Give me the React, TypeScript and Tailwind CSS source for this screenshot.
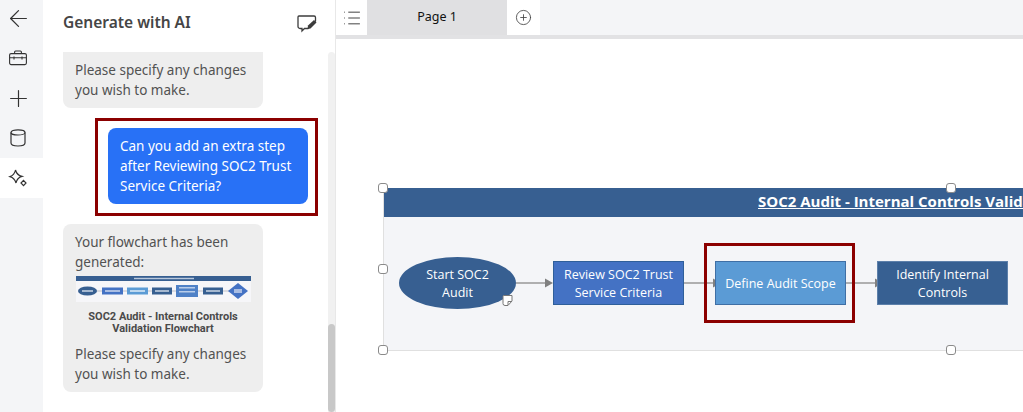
import React from 'react';
import { ArrowLeft, CirclePlus, List, Plus } from 'lucide-react';

const Handle = ({ className }: { className: string }) => (
  <div className={`absolute w-[10px] h-[10px] bg-white border border-[#8a8a8a] rounded-[3px] ${className}`} />
);

// tiny preview of the generated flowchart
const Thumbnail = () => (
  <svg width="175" height="26" viewBox="0 0 175 26" className="block mx-auto blur-[0.3px]">
    <rect width="175" height="26" fill="#f6f6f9" />
    <rect width="175" height="5" fill="#375f91" />
    <rect x="58" y="1.8" width="60" height="1.4" fill="#b9c8dc" />
    <line x1="10" y1="15" x2="160" y2="15" stroke="#9aa0a8" strokeWidth="0.6" />
    <ellipse cx="11.5" cy="15" rx="9.5" ry="4.5" fill="#375f91" />
    <rect x="26" y="11.5" width="21" height="7" fill="#4472c4" />
    <rect x="51" y="11.5" width="21" height="7" fill="#5b9bd5" />
    <rect x="76" y="11.5" width="20" height="7" fill="#375f91" />
    <rect x="100" y="9" width="22" height="12" fill="#4f81c7" />
    <rect x="127" y="11.5" width="20" height="7" fill="#375f91" />
    <path d="M162 7 L172 15 L162 23 L152 15 Z" fill="#4472c4" />
    <rect x="29" y="14" width="15" height="2" fill="#a9bde3" />
    <rect x="54" y="14" width="15" height="2" fill="#bcd7ef" />
    <rect x="79" y="14" width="14" height="2" fill="#a5b8d0" />
    <rect x="103" y="11" width="16" height="1.5" fill="#b9cdea" />
    <rect x="103" y="15" width="16" height="1.5" fill="#b9cdea" />
    <rect x="130" y="14" width="14" height="2" fill="#a5b8d0" />
    <rect x="6" y="14" width="11" height="2" fill="#a5b8d0" />
    <rect x="158" y="13" width="8" height="4" fill="#a9bde3" />
  </svg>
);

const Connector = ({ className }: { className: string }) => (
  <svg width="38" height="12" viewBox="0 0 38 12" className={`absolute ${className}`}>
    <line x1="0" y1="6" x2="30" y2="6" stroke="#808080" strokeWidth="1.2" />
    <path d="M29 1.5 L37 6 L29 10.5 Z" fill="#808080" />
  </svg>
);

const App: React.FC = () => {
  return (
    <div className="flex w-[1023px] h-[412px] overflow-hidden bg-white text-[#3f3f46] font-['Noto_Sans',sans-serif]">
      {/* icon rail */}
      <div className="w-[43px] shrink-0 bg-[#f4f5f7] flex flex-col text-[#333333]">
        <div className="h-[38px] pb-[2px] pr-[7px] flex items-center justify-center"><ArrowLeft size={27} strokeWidth={1.1} /></div>
        <div className="h-[40px] pr-[7px] flex items-center justify-center">
          <svg width="18" height="16" viewBox="0 0 18 16" fill="none" stroke="currentColor" strokeWidth="1.1">
            <rect x="0.6" y="3.6" width="16.8" height="11" rx="1.5" />
            <path d="M5.6 3.6 V2 A1 1 0 0 1 6.6 1 H11.4 A1 1 0 0 1 12.4 2 V3.6" />
            <path d="M0.6 7.8 H17.4 M5 6.4 V9.4 M13 6.4 V9.4" />
          </svg>
        </div>
        <div className="h-[40px] pr-[7px] flex items-center justify-center"><Plus size={27} strokeWidth={1.05} /></div>
        <div className="h-[40px] pr-[7px] flex items-center justify-center">
          <svg width="16" height="18" viewBox="0 0 16 18" fill="none" stroke="currentColor" strokeWidth="1.2">
            <ellipse cx="8" cy="3.4" rx="7" ry="2.6" />
            <path d="M1 3.4 V14 C1 16 3.5 17 8 17 C12.5 17 15 16 15 14 V3.4" />
          </svg>
        </div>
        <div className="h-[40px] pr-[7px] bg-white flex items-center justify-center">
          <svg width="20" height="20" viewBox="0 0 20 20" fill="none" stroke="currentColor" strokeWidth="1.2">
            <path d="M7.5 2 C8.4 5.6 10 7.4 14 8.4 C10.4 9.4 8.8 11 8 15 C7 11.2 5.4 9.6 2 8.6 C5.4 7.4 6.8 5.6 7.5 2 Z" />
            <path d="M15.5 12.4 L18 15 L15.5 17.6 L13 15 Z" />
          </svg>
        </div>
      </div>

      {/* chat panel */}
      <div className="w-[293px] shrink-0 flex flex-col border-r border-[#e8e8e8]">
        <div className="h-[52px] shrink-0 pl-5 pr-[18px] pb-[6px] flex items-center justify-between">
          <span className="text-[15.5px] font-semibold text-[#454545]">Generate with AI</span>
          <svg width="20" height="20" viewBox="0 0 20 20" fill="none" stroke="#3c3c3c" strokeWidth="1.3">
            <path d="M2 3 H17 A1.5 1.5 0 0 1 18.5 4.5 V8 L11 15.5 H7.5 L5 18 V15.5 H3 A2 2 0 0 1 1 13.5 V4 A1 1 0 0 1 2 3 Z" />
            <path d="M10.5 16 L11 12.5 L17 7 L19.5 9.5 L13.5 15.5 Z" fill="#3c3c3c" stroke="none" />
          </svg>
        </div>
        <div className="flex-1 flex min-h-0">
          <div className="flex-1 pl-5 text-[13.5px] leading-[20px] text-[#525252]">
            <div className="w-[200px] h-[56px] bg-[#eeeeee] rounded-b-lg px-3 pt-[8px]">
              Please specify any changes you wish to make.
            </div>
            <div className="w-[223px] h-[98px] mt-[10px] ml-[32px] border-[3px] border-[#8b0000] pl-[10px] pr-[7px] pt-[7px]">
              <div className="w-[200px] h-[76px] bg-[#2871f6] rounded-lg text-white px-3 pt-[8px]">
                Can you add an extra step after Reviewing SOC2 Trust Service Criteria?
              </div>
            </div>
            <div className="w-[200px] h-[168px] mt-[8px] bg-[#eeeeee] rounded-lg pt-[8px]">
              <div className="px-3">Your flowchart has been generated:</div>
              <div className="mt-[4px]"><Thumbnail /></div>
              <div className="mt-[9px] text-[11px] leading-[12px] font-bold text-center text-[#4a4a4a] font-['Roboto',sans-serif]">
                <div>SOC2 Audit - Internal Controls</div>
                <div>Validation Flowchart</div>
              </div>
              <div className="px-3 mt-[9px]">Please specify any changes you wish to make.</div>
            </div>
          </div>
          <div className="w-[7px] mr-0 bg-[#f1f1f1] rounded-t flex flex-col justify-end">
            <div className="h-[88px] bg-[#c8c8c8] rounded-[4px]" />
          </div>
        </div>
      </div>

      {/* page canvas */}
      <div className="flex-1 flex flex-col min-w-0">
        <div className="h-[39px] shrink-0 flex border-b-4 border-[#e2e2e4] bg-[#f4f5f7]">
          <div className="w-[31px] bg-white flex items-center justify-center text-[#444]"><List size={20} strokeWidth={1.2} /></div>
          <div className="w-[140px] bg-[#e0e0e2] flex items-center justify-center text-[12.5px] text-[#111]">Page 1</div>
          <div className="w-[33px] bg-white flex items-center justify-center text-[#444]"><CirclePlus size={17} strokeWidth={1.2} /></div>
        </div>
        <div className="relative flex-1 overflow-hidden text-white text-[12.5px] leading-[18px] font-['Open_Sans',sans-serif]">
          <div className="absolute left-[47px] top-[149px] w-[640px] h-[163px] bg-[#f4f5f8] border-l border-b border-[#e0e0e0]">
            <div className="h-[29px] bg-[#375f91] pl-[374px] text-[15px] leading-[27px] font-bold underline whitespace-nowrap">
              SOC2 Audit - Internal Controls Validation
            </div>
          </div>

          <Connector className="left-[180px] top-[238px]" />
          <Connector className="left-[348px] top-[238px]" />
          <Connector className="left-[510px] top-[238px]" />

          <div className="absolute left-[63px] top-[218px] w-[117px] h-[52px] pt-px rounded-[50%] bg-[#375f91] flex items-center justify-center text-center">
            Start SOC2<br />Audit
          </div>
          <div className="absolute left-[217px] top-[222px] w-[131px] h-[44px] pt-px bg-[#4472c4] border border-[#2f5f9a] flex items-center justify-center text-center">
            Review SOC2 Trust<br />Service Criteria
          </div>
          <div className="absolute left-[379px] top-[222px] w-[131px] h-[44px] pt-px bg-[#5b9bd5] border border-[#3f6fa5] flex items-center justify-center text-center">
            Define Audit Scope
          </div>
          <div className="absolute left-[541px] top-[222px] w-[131px] h-[44px] pt-px bg-[#376092] border border-[#5d80aa] flex items-center justify-center text-center">
            Identify Internal<br />Controls
          </div>

          {/* highlight round the new step */}
          <div className="absolute left-[368px] top-[204px] w-[151px] h-[80px] border-[3px] border-[#8b0000]" />

          <Handle className="left-[42px] top-[144px]" />
          <Handle className="left-[610px] top-[144px]" />
          <Handle className="left-[42px] top-[225px]" />
          <Handle className="left-[42px] top-[306px]" />
          <Handle className="left-[610px] top-[306px]" />

          {/* comment note on the start node */}
          <svg width="11" height="11" viewBox="0 0 11 11" className="absolute left-[166px] top-[256px]">
            <path d="M1.5 0.5 H10 V6 L6 10.5 H3 A2 2 0 0 1 1 8.5 V1 Z" fill="#fff" stroke="#777" strokeWidth="1" />
            <path d="M6 10 V6.5 H10" fill="none" stroke="#777" strokeWidth="1" />
          </svg>
        </div>
      </div>
    </div>
  );
};

export default App;
